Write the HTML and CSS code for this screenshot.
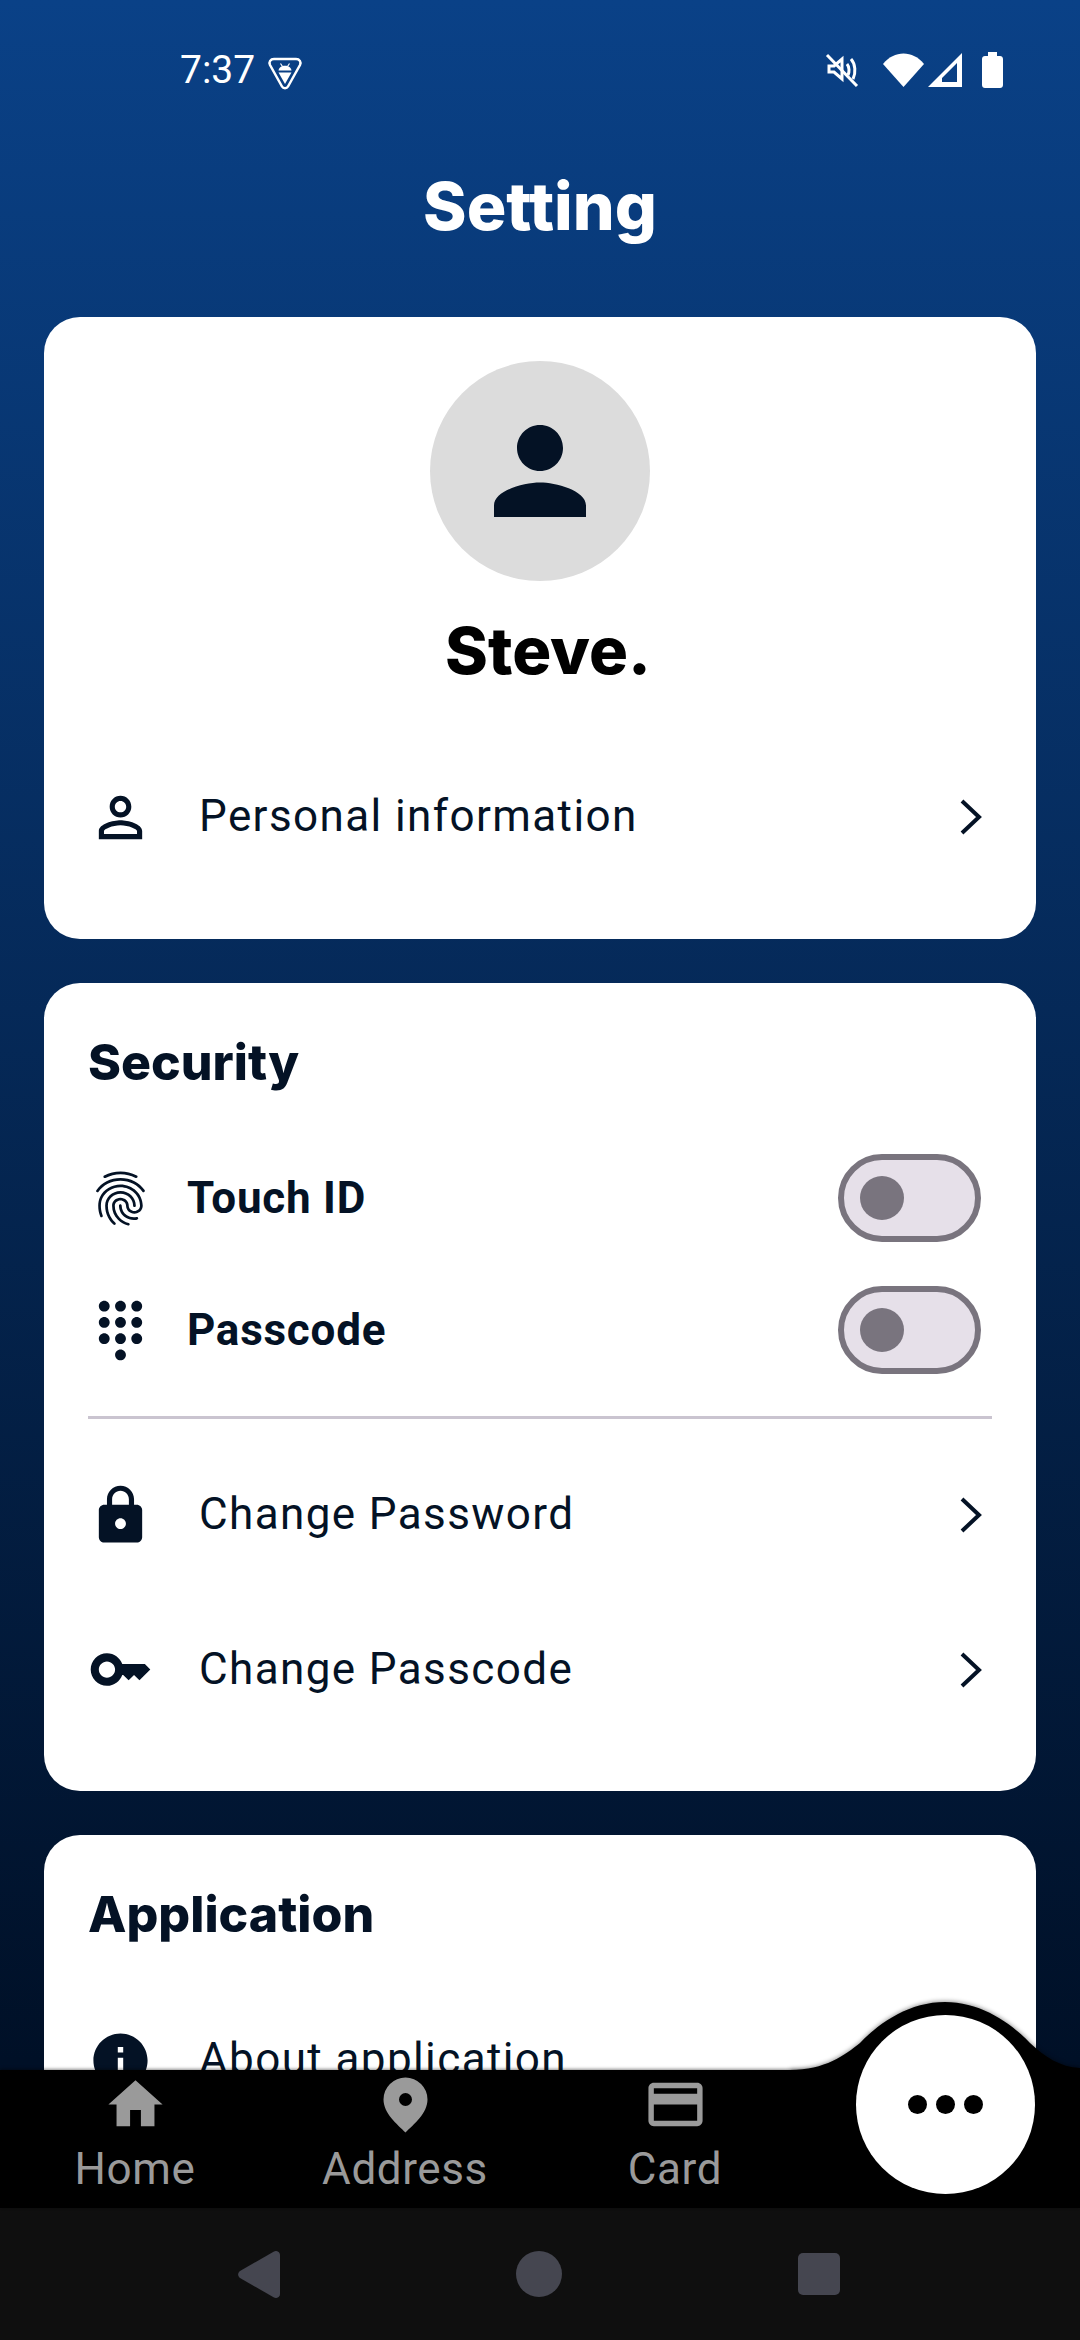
FILE: index.html
```html
<!doctype html>
<html>
<head>
<meta charset="utf-8">
<title>Setting</title>
<link rel="stylesheet" href="styles.css">
</head>
<body>
<div class="app">
	<div class="status">
		<span class="time">7:37</span>
		<svg class="st-badge" viewBox="0 0 36 33" width="36" height="33">
			<path d="M7 2h22c3.500 0 5.500 3 4 6L21 29.500c-1.300 2.300-4.700 2.300-6 0L3 8C1.500 5 3.500 2 7 2z" fill="none" stroke="#fff" stroke-width="2.500"/>
			<path d="M11.500 13.500c.4-3 3-4.800 6.500-4.800s6.100 1.800 6.500 4.800z" fill="#fff"/>
			<path d="M13.500 6.500l2 3M22.500 6.500l-2 3" stroke="#fff" stroke-width="1.200"/>
			<path d="M11.500 15.500h13L18 27z" fill="#fff"/>
		</svg>
		<span class="st-space"></span>
		<svg class="st-mute" viewBox="0 0 34 34" width="34" height="34">
			<path d="M2 2l30 31" stroke="#fff" stroke-width="3" fill="none"/>
			<path d="M4 13h5l8-7v20l-8-7H4z" fill="none" stroke="#fff" stroke-width="3"/>
			<path d="M22 11c2.500 3 2.500 8 1 11M26 6c4.500 5 5 14 2 20" fill="none" stroke="#fff" stroke-width="3"/>
		</svg>
		<svg class="st-wifi" viewBox="0 0 41 34" width="41" height="34">
			<path d="M0 11C11-3 30-3 41 11L20.500 34z" fill="#fff"/>
		</svg>
		<svg class="st-signal" viewBox="0 0 34 34" width="34" height="34">
			<path fill-rule="evenodd" d="M34 0v34H0zM14 25v4h15V10z" fill="#fff"/>
		</svg>
		<svg class="st-battery" viewBox="0 0 21 36" width="21" height="36">
			<path d="M6 0h9v4h3c1.700 0 3 1.300 3 3v26c0 1.700-1.300 3-3 3H3c-1.700 0-3-1.300-3-3V7c0-1.700 1.300-3 3-3h3z" fill="#fff"/>
		</svg>
	</div>

	<h1 class="title">Setting</h1>

	<div class="main">
		<section class="card">
			<div class="avatar">
				<svg viewBox="0 0 24 24" width="138" height="138"><path d="M12 12c2.210 0 4-1.790 4-4s-1.790-4-4-4-4 1.790-4 4 1.790 4 4 4zm0 2c-2.670 0-8 1.340-8 4v2h16v-2c0-2.660-5.330-4-8-4z"/></svg>
			</div>
			<div class="name">Steve.</div>
			<div class="row row-first">
				<svg class="icon" viewBox="0 0 24 24"><path d="M12 5.900c1.160 0 2.100.94 2.100 2.100s-.94 2.100-2.100 2.100S9.900 9.160 9.900 8s.94-2.100 2.100-2.100m0 9c2.970 0 6.100 1.460 6.100 2.100v1.100H5.900V17c0-.64 3.130-2.100 6.100-2.100M12 4C9.790 4 8 5.790 8 8s1.790 4 4 4 4-1.790 4-4-1.790-4-4-4zm0 9c-2.670 0-8 1.340-8 4v3h16v-3c0-2.660-5.330-4-8-4z"/></svg>
				<span class="label">Personal information</span>
				<svg class="chevron" viewBox="0 0 22 36"><path d="M2 2l17 16L2 34"/></svg>
			</div>
		</section>

		<section class="card">
			<h2 class="heading">Security</h2>
			<div class="toggles">
				<div class="toggle-row">
					<svg class="icon" viewBox="0 0 24 24"><path d="M17.810 4.470c-.08 0-.16-.02-.23-.06C15.660 3.420 14 3 12.010 3c-1.980 0-3.860.47-5.570 1.410-.24.13-.54.04-.68-.2-.13-.24-.04-.55.2-.68C7.820 2.520 9.860 2 12.010 2c2.130 0 3.990.47 6.030 1.520.25.13.34.43.21.67-.09.18-.26.28-.44.28zM3.500 9.720c-.1 0-.2-.03-.29-.09-.23-.16-.28-.47-.12-.7.99-1.400 2.250-2.500 3.750-3.270C9.980 4.040 14 4.030 17.150 5.650c1.500.77 2.760 1.860 3.750 3.250.16.22.11.54-.12.7-.23.16-.54.11-.7-.12-.9-1.260-2.040-2.250-3.390-2.940-2.870-1.470-6.540-1.470-9.400.01-1.360.7-2.500 1.700-3.400 2.960-.08.14-.23.21-.39.21zm6.250 12.070c-.13 0-.26-.05-.35-.15-.87-.87-1.340-1.430-2.010-2.640-.69-1.230-1.050-2.730-1.050-4.340 0-2.970 2.540-5.390 5.660-5.390s5.660 2.420 5.660 5.390c0 .28-.22.5-.5.5s-.5-.22-.5-.5c0-2.420-2.090-4.390-4.660-4.390-2.570 0-4.660 1.970-4.660 4.390 0 1.440.32 2.770.93 3.850.64 1.150 1.080 1.640 1.850 2.420.19.2.19.51 0 .71-.11.1-.24.15-.37.15zm7.170-1.850c-1.190 0-2.240-.3-3.100-.89-1.490-1.010-2.380-2.650-2.380-4.390 0-.28.22-.5.5-.5s.5.22.5.5c0 1.410.72 2.740 1.940 3.560.71.48 1.540.71 2.540.71.24 0 .64-.03 1.040-.1.27-.05.53.13.58.41.05.27-.13.53-.41.58-.57.11-1.070.12-1.210.12zM14.910 22c-.04 0-.09-.01-.13-.02-1.590-.44-2.630-1.030-3.720-2.100-1.400-1.390-2.170-3.240-2.170-5.220 0-1.620 1.380-2.940 3.080-2.940 1.700 0 3.080 1.320 3.080 2.940 0 1.070.93 1.940 2.080 1.940s2.080-.87 2.080-1.940c0-3.770-3.250-6.830-7.250-6.830-2.840 0-5.440 1.580-6.610 4.030-.39.81-.59 1.760-.59 2.800 0 .78.07 2.010.67 3.610.1.26-.03.55-.29.64-.26.1-.55-.04-.64-.29-.49-1.310-.73-2.610-.73-3.960 0-1.200.23-2.290.68-3.240 1.330-2.790 4.280-4.600 7.510-4.600 4.550 0 8.250 3.510 8.250 7.830 0 1.620-1.380 2.940-3.080 2.940s-3.080-1.320-3.080-2.940c0-1.070-.93-1.940-2.080-1.940s-2.080.87-2.080 1.940c0 1.710.66 3.310 1.870 4.510.95.94 1.860 1.460 3.270 1.850.27.07.42.35.35.61-.05.23-.26.38-.47.38z"/></svg>
					<span class="toggle-label">Touch ID</span>
					<span class="switch"><i></i></span>
				</div>
				<div class="toggle-row">
					<svg class="icon" viewBox="0 0 24 24"><path d="M12 19c-1.100 0-2 .9-2 2s.9 2 2 2 2-.9 2-2-.9-2-2-2zM6 1c-1.100 0-2 .9-2 2s.9 2 2 2 2-.9 2-2-.9-2-2-2zm0 6c-1.100 0-2 .9-2 2s.9 2 2 2 2-.9 2-2-.9-2-2-2zm0 6c-1.100 0-2 .9-2 2s.9 2 2 2 2-.9 2-2-.9-2-2-2zm12-8c1.100 0 2-.9 2-2s-.9-2-2-2-2 .9-2 2 .9 2 2 2zm-6 8c-1.100 0-2 .9-2 2s.9 2 2 2 2-.9 2-2-.9-2-2-2zm6 0c-1.100 0-2 .9-2 2s.9 2 2 2 2-.9 2-2-.9-2-2-2zm0-6c-1.100 0-2 .9-2 2s.9 2 2 2 2-.9 2-2-.9-2-2-2zm-6 0c-1.100 0-2 .9-2 2s.9 2 2 2 2-.9 2-2-.9-2-2-2zm0-6c-1.100 0-2 .9-2 2s.9 2 2 2 2-.9 2-2-.9-2-2-2z"/></svg>
					<span class="toggle-label">Passcode</span>
					<span class="switch"><i></i></span>
				</div>
			</div>
			<div class="divider"></div>
			<div class="row">
				<svg class="icon" viewBox="0 0 24 24"><path d="M18 8h-1V6c0-2.760-2.240-5-5-5S7 3.240 7 6v2H6c-1.100 0-2 .9-2 2v10c0 1.100.9 2 2 2h12c1.100 0 2-.9 2-2V10c0-1.100-.9-2-2-2zm-6 9c-1.100 0-2-.9-2-2s.9-2 2-2 2 .9 2 2-.9 2-2 2zm3.100-9H8.900V6c0-1.710 1.390-3.100 3.100-3.100 1.710 0 3.100 1.390 3.100 3.100v2z"/></svg>
				<span class="label">Change Password</span>
				<svg class="chevron" viewBox="0 0 22 36"><path d="M2 2l17 16L2 34"/></svg>
			</div>
			<div class="row">
				<svg class="icon" viewBox="0 0 24 24"><path d="M21 10h-8.350C11.830 7.670 9.610 6 7 6c-3.310 0-6 2.690-6 6s2.690 6 6 6c2.610 0 4.830-1.670 5.650-4H13l2 2 2-2 2 2 4-4.040L21 10zM7 15c-1.650 0-3-1.350-3-3s1.350-3 3-3 3 1.350 3 3-1.350 3-3 3z"/></svg>
				<span class="label">Change Passcode</span>
				<svg class="chevron" viewBox="0 0 22 36"><path d="M2 2l17 16L2 34"/></svg>
			</div>
		</section>

		<section class="card">
			<h2 class="heading">Application</h2>
			<div class="row row-about">
				<svg class="icon" viewBox="0 0 24 24"><path d="M12 2C6.480 2 2 6.480 2 12s4.480 10 10 10 10-4.480 10-10S17.520 2 12 2zm1 15h-2v-6h2v6zm0-8h-2V7h2v2z"/></svg>
				<span class="label">About application</span>
				<svg class="chevron" viewBox="0 0 22 36"><path d="M2 2l17 16L2 34"/></svg>
			</div>
		</section>
	</div>

	<div class="tabbar">
		<svg class="notch" viewBox="0 0 320 72" width="320" height="72">
			<path d="M30 70C65 70 85 55 100 43C120 22 150 2 185 2C220 2 250 22 270 43C285 57 300 67 320 68V72H30z"/>
		</svg>
		<div class="tab">
			<svg viewBox="0 0 24 24"><path d="M10 20v-6h4v6h5v-8h3L12 3 2 12h3v8z"/></svg>
			<span>Home</span>
		</div>
		<div class="tab">
			<svg viewBox="0 0 65 65"><path fill-rule="evenodd" d="M10.500 27.500a22 22 0 0 1 44 0c0 14-14 25-22 33-8-8-22-19-22-33zm22-6.500a6.500 6.500 0 1 0 0 13 6.500 6.500 0 0 0 0-13z"/></svg>
			<span>Address</span>
		</div>
		<div class="tab">
			<svg viewBox="0 0 24 24"><path d="M20 4H4c-1.110 0-1.990.89-1.990 2L2 18c0 1.110.89 2 2 2h16c1.110 0 2-.89 2-2V6c0-1.110-.89-2-2-2zm0 14H4v-6h16v6zm0-10H4V6h16v2z"/></svg>
			<span>Card</span>
		</div>
		<div class="fab"><i></i><i></i><i></i></div>
	</div>

	<div class="navbar">
		<svg viewBox="0 0 42 47" width="42" height="47"><path d="M36 .5c3-1.500 6 .5 6 3.500v39c0 3-3 5-6 3.500L2 27c-2.500-2-2.500-5 0-7z" fill="#454650"/></svg>
		<span class="nav-circle"></span>
		<span class="nav-square"></span>
	</div>
</div>
</body>
</html>
```

FILE: styles.css
```css
*{margin:0; padding:0; box-sizing:border-box;}
html,body{width:1080px; height:2340px; overflow:hidden;}
body{font-family:"Roboto","Noto Sans",sans-serif; color:#041225;}
.app{width:1080px; height:2340px; display:flex; flex-direction:column; overflow:hidden; background:linear-gradient(180deg,#0a4187 0%,#001027 88%);}

/* status bar */
.status{height:56px; margin-top:42px; padding:0 77px 0 180px; display:flex; align-items:center; color:#fff; flex:none;}
.time{font-size:39px; line-height:56px; width:87px;}
.st-badge{margin-top:6px;}
.st-space{flex:1;}
.st-wifi{margin-left:24px;}
.st-signal{margin-left:4px;}
.st-battery{margin-left:20px;}

.title{flex:none; height:90px; margin-top:63px; margin-bottom:66px; text-align:center; color:#fff; font:800 66px/90px "Inter",sans-serif;}

/* scrolling cards */
.main{flex:1; min-height:0; overflow:hidden; padding:0 44px; display:flex; flex-direction:column; gap:44px;}
.card{flex:none; background:#fff; border-radius:36px; padding:44px;}
.avatar{width:220px; height:220px; margin:0 auto; border-radius:50%; background:#dcdcdc; display:flex; align-items:center; justify-content:center;}
.avatar svg{fill:#041225;}
.name{margin-top:30px; padding-left:16px; text-align:center; color:#000; font:800 65px/80px "Inter",sans-serif;}
.heading{font:800 50px/70px "Inter",sans-serif; color:#041225;}

.icon{width:65px; height:65px; flex:none; fill:#041225;}
.row{height:154.500px; display:flex; align-items:center;}
.row-first{margin-top:49px;}
.row-about{margin-top:34px;}
.label{flex:1; margin-left:46px; padding-bottom:2px; font-size:44px; letter-spacing:1.400px;}
.chevron{width:22px; height:36px; margin-right:10px; fill:none; stroke:#041225; stroke-width:4;}

.toggles{margin-top:35.500px;}
.toggle-row{height:132px; display:flex; align-items:center;}
.toggle-label{flex:1; margin-left:34px; font-size:44px; font-weight:700; letter-spacing:.750px;}
.switch{width:143px; height:88px; margin-right:11px; border:6px solid #79747e; border-radius:44px; background:#e6e0e9; display:flex; align-items:center; padding-left:16px;}
.switch i{display:block; width:44px; height:44px; border-radius:50%; background:#79747e;}
.divider{height:3px; margin:20px 0 19px; background:#cac4d0;}

/* bottom bar */
.tabbar{flex:none; height:138px; position:relative; background:#000; display:flex; box-shadow:0 -1px 3px rgba(0,0,0,.45);}
.notch{position:absolute; left:760px; top:-70px; fill:#000; filter:drop-shadow(0 -1px 2px rgba(0,0,0,.4));}
.tab{width:270px; padding-top:2px; display:flex; flex-direction:column; align-items:center; color:#9a9a9a; position:relative;}
.tab svg{width:65px; height:65px; fill:#9a9a9a;}
.tab span{margin-top:4px; font-size:44px; line-height:56px; letter-spacing:.600px;}
.fab{position:absolute; left:856px; top:-55px; width:179px; height:179px; border-radius:50%; background:#fff; display:flex; align-items:center; justify-content:center; gap:9px;}
.fab i{display:block; width:19px; height:19px; border-radius:50%; background:#000;}

.navbar{flex:none; height:132px; background:#0f0f0f; display:flex; align-items:center; padding-left:238px;}
.nav-circle{width:46px; height:46px; border-radius:50%; background:#454650; margin-left:236px;}
.nav-square{width:42px; height:42px; border-radius:5px; background:#454650; margin-left:236px;}
```
